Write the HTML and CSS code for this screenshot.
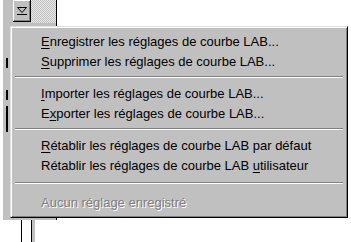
FILE: index.html
```html
<!DOCTYPE html>
<html>
<head>
<meta charset="utf-8">
<link rel="stylesheet" href="styles.css">
</head>
<body>
<div class="desk">
  <div class="panel">
    <div class="toolbar">
      <div class="btn">
        <svg width="12" height="10" viewBox="0 0 12 10"><path d="M1.5 1.5 H10.5 L6 6.5 Z M1 8.5 H11" fill="none" stroke="#000" stroke-width="1"/></svg>
      </div>
      <div class="dots"></div>
    </div>
    <div class="side">
      <div class="tick t1"></div>
      <div class="tick t2"></div>
      <div class="tick t3"></div>
    </div>
  </div>
  <div class="bottom">
    <div class="rail"></div>
  </div>
</div>
<div class="menu">
  <div class="item"><u>E</u>nregistrer les réglages de courbe LAB...</div>
  <div class="item"><u>S</u>upprimer les réglages de courbe LAB...</div>
  <div class="sep"></div>
  <div class="item"><u>I</u>mporter les réglages de courbe LAB...</div>
  <div class="item">E<u>x</u>porter les réglages de courbe LAB...</div>
  <div class="sep"></div>
  <div class="item"><u>R</u>établir les réglages de courbe LAB par défaut</div>
  <div class="item">Rétablir les réglages de courbe LAB <u>u</u>tilisateur</div>
  <div class="sep last"></div>
  <div class="item disabled">Aucun réglage enregistré</div>
</div>
</body>
</html>
```
FILE: styles.css
```css
html, body {
  margin: 0;
  padding: 0;
}
body {
  width: 351px;
  height: 242px;
  overflow: hidden;
  background: #fff;
  position: relative;
  font-family: "Liberation Sans", Arial, sans-serif;
  font-size: 13px;
}
.desk {
  width: 351px;
  height: 242px;
}
.panel {
  margin-left: 3px;
  width: 53px;
  height: 220px;
  background: #c0c0c0;
  border-right: 1px solid #000;
  display: flex;
  flex-direction: column;
}
.toolbar {
  display: flex;
  height: 23px;
}
.btn {
  margin-left: 10px;
  width: 17px;
  height: 21px;
  background: #c0c0c0;
  border-right: 1px solid #000;
  border-bottom: 1px solid #000;
  box-shadow: inset 1px 1px #fff, inset -1px -1px #808080;
  display: flex;
  align-items: center;
  justify-content: center;
}
.dots {
  flex: 1;
  background-color: #e8e8e8;
  background-image: linear-gradient(45deg, #c0c0c0 25%, transparent 25%, transparent 75%, #c0c0c0 75%),
                    linear-gradient(45deg, #c0c0c0 25%, transparent 25%, transparent 75%, #c0c0c0 75%);
  background-size: 2px 2px;
  background-position: 0 0, 1px 1px;
}
.side {
  flex: 1;
  display: flex;
  flex-direction: column;
  padding-top: 35px;
}
.tick {
  width: 2px;
  margin-left: 3px;
  background: #000;
}
.t1 { height: 10px; }
.t2 { height: 10px; margin-top: 22px; }
.t3 { height: 26px; margin-top: 6px; }
.bottom {
  height: 22px;
  display: flex;
}
.rail {
  margin-left: 21px;
  width: 9px;
  height: 22px;
  border-left: 1px solid #000;
  border-right: 1px solid #000;
  box-shadow: 3px 0 0 #c0c0c0;
  background: #fff;
}
.menu {
  position: absolute;
  left: 10px;
  top: 26px;
  width: 338px;
  box-sizing: border-box;
  background: #c0c0c0;
  border: 1px solid;
  border-color: #dfdfdf #000 #000 #dfdfdf;
  box-shadow: inset 1px 1px #fff, inset -1px -1px #808080;
  padding: 5px 3px 4px 3px;
}
.item {
  height: 20px;
  line-height: 20px;
  padding-left: 27px;
  color: #000;
  white-space: nowrap;
}
.item u {
  text-decoration-thickness: 1px;
  text-underline-offset: 2px;
}
.sep {
  height: 0;
  border-top: 1px solid #808080;
  border-bottom: 1px solid #fff;
  margin: 4px 1px 6px 1px;
}
.sep.last {
  margin: 6px 1px 9px 1px;
}
.disabled {
  color: #808080;
  text-shadow: 1px 1px 0 #fff;
}
```
